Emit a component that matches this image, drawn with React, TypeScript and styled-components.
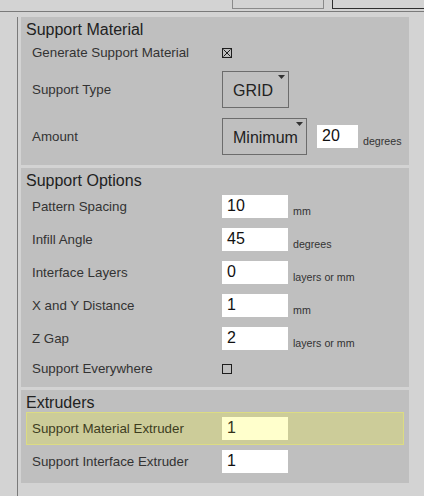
import React from "react";
import styled, { createGlobalStyle } from "styled-components";

const Global = createGlobalStyle`
  html, body {
    margin: 0;
    padding: 0;
    background: #d3d3d3;
    font-family: "Liberation Sans", Arial, sans-serif;
    overflow: hidden;
  }
  * { box-sizing: border-box; }
`;

const Page = styled.div`
  width: 424px;
  height: 496px;
  display: flex;
  flex-direction: column;
  background: #d3d3d3;
`;

const TopBar = styled.div`
  height: 12px;
  display: flex;
  align-items: flex-start;
  border-bottom: 1px solid #7a7a7a;
  padding-left: 232px;
  gap: 8px;
`;

const Tab = styled.div<{ $dark?: boolean; $w: number }>`
  width: ${(p) => p.$w}px;
  height: 9px;
  border: 1px solid ${(p) => (p.$dark ? "#2e2e2e" : "#8a8a8a")};
  border-top: none;
  flex-shrink: 0;
`;

const Body = styled.div`
  flex: 1;
  display: flex;
  padding: 5px 0 0 17px;
`;

const Rail = styled.div`
  width: 1px;
  background: #7a7a7a;
  align-self: stretch;
`;

const Panels = styled.div`
  margin-left: 3px;
  width: 388px;
  display: flex;
  flex-direction: column;
  gap: 3px;
`;

const Panel = styled.section`
  background: #bfbfbf;
  padding: 3px 5px 5px 5px;
`;

const PanelTitle = styled.h2`
  margin: 0;
  font-size: 16px;
  font-weight: normal;
  line-height: 19px;
  color: #222;
  padding-left: 0;
`;

const Row = styled.div<{ $h: number; $hl?: boolean }>`
  height: ${(p) => p.$h}px;
  display: flex;
  align-items: center;
  padding: 0 6px 0 5px;
  border: 1px solid ${(p) => (p.$hl ? "#dcdc82" : "transparent")};
  background: ${(p) => (p.$hl ? "#cccc99" : "transparent")};
`;

const Label = styled.span<{ $hl?: boolean }>`
  width: 190px;
  flex-shrink: 0;
  font-size: 13.33px;
  color: ${(p) => (p.$hl ? "#3d3d1e" : "#333")};
`;

const Controls = styled.div`
  display: flex;
  align-items: center;
  gap: 10px;
`;

const InputGroup = styled.div`
  display: flex;
  align-items: flex-end;
  gap: 5px;
`;

const Input = styled.div<{ $w: number; $hl?: boolean }>`
  width: ${(p) => p.$w}px;
  height: 23px;
  background: ${(p) => (p.$hl ? "#ffffcc" : "#fff")};
  color: ${(p) => (p.$hl ? "#33331a" : "#111")};
  font-size: 16px;
  line-height: 22px;
  padding-left: 5px;
`;

const Unit = styled.span`
  font-size: 10.67px;
  color: #333;
  line-height: 12px;
  padding-bottom: 1px;
`;

const Select = styled.div<{ $w: number }>`
  position: relative;
  width: ${(p) => p.$w}px;
  height: 37px;
  border: 1px solid #6c6c6c;
  font-size: 16px;
  color: #222;
  display: flex;
  align-items: center;
  padding: 3px 0 0 10px;
`;

const Arrow = styled.svg`
  position: absolute;
  top: 3px;
  right: 3px;
`;

const Check = styled.span`
  width: 10px;
  height: 10px;
  border: 1px solid #1e1e1e;
  display: inline-flex;
`;

const CheckBox = ({ checked }: { checked?: boolean }) => (
  <Check>
    {checked && (
      <svg width="8" height="8" viewBox="0 0 8 8">
        <path d="M0.5 0.5 L7.5 7.5 M7.5 0.5 L0.5 7.5" stroke="#1e1e1e" strokeWidth="1" />
      </svg>
    )}
  </Check>
);

const DropDown = ({ value, w }: { value: string; w: number }) => (
  <Select $w={w}>
    {value}
    <Arrow width="7" height="4" viewBox="0 0 7 4">
      <polygon points="0,0 7,0 3.5,4" fill="#333" />
    </Arrow>
  </Select>
);

const InputRow = ({
  label,
  value,
  unit,
  hl,
}: {
  label: string;
  value: string;
  unit?: string;
  hl?: boolean;
}) => (
  <Row $h={33} $hl={hl}>
    <Label $hl={hl}>{label}</Label>
    <InputGroup>
      <Input $w={66} $hl={hl}>{value}</Input>
      {unit && <Unit>{unit}</Unit>}
    </InputGroup>
  </Row>
);

export default function App() {
  return (
    <Page>
      <Global />
      <TopBar>
        <Tab $w={92} />
        <Tab $w={100} $dark />
      </TopBar>
      <Body>
        <Rail />
        <Panels>
          <Panel>
            <PanelTitle>Support Material</PanelTitle>
            <Row $h={27}>
              <Label>Generate Support Material</Label>
              <CheckBox checked />
            </Row>
            <Row $h={47}>
              <Label>Support Type</Label>
              <DropDown value="GRID" w={67} />
            </Row>
            <Row $h={47}>
              <Label>Amount</Label>
              <Controls>
                <DropDown value="Minimum" w={85} />
                <InputGroup>
                  <Input $w={41}>20</Input>
                  <Unit>degrees</Unit>
                </InputGroup>
              </Controls>
            </Row>
          </Panel>
          <Panel>
            <PanelTitle>Support Options</PanelTitle>
            <InputRow label="Pattern Spacing" value="10" unit="mm" />
            <InputRow label="Infill Angle" value="45" unit="degrees" />
            <InputRow label="Interface Layers" value="0" unit="layers or mm" />
            <InputRow label="X and Y Distance" value="1" unit="mm" />
            <InputRow label="Z Gap" value="2" unit="layers or mm" />
            <Row $h={27}>
              <Label>Support Everywhere</Label>
              <CheckBox />
            </Row>
          </Panel>
          <Panel>
            <PanelTitle>Extruders</PanelTitle>
            <InputRow label="Support Material Extruder" value="1" hl />
            <InputRow label="Support Interface Extruder" value="1" />
          </Panel>
        </Panels>
      </Body>
    </Page>
  );
}
